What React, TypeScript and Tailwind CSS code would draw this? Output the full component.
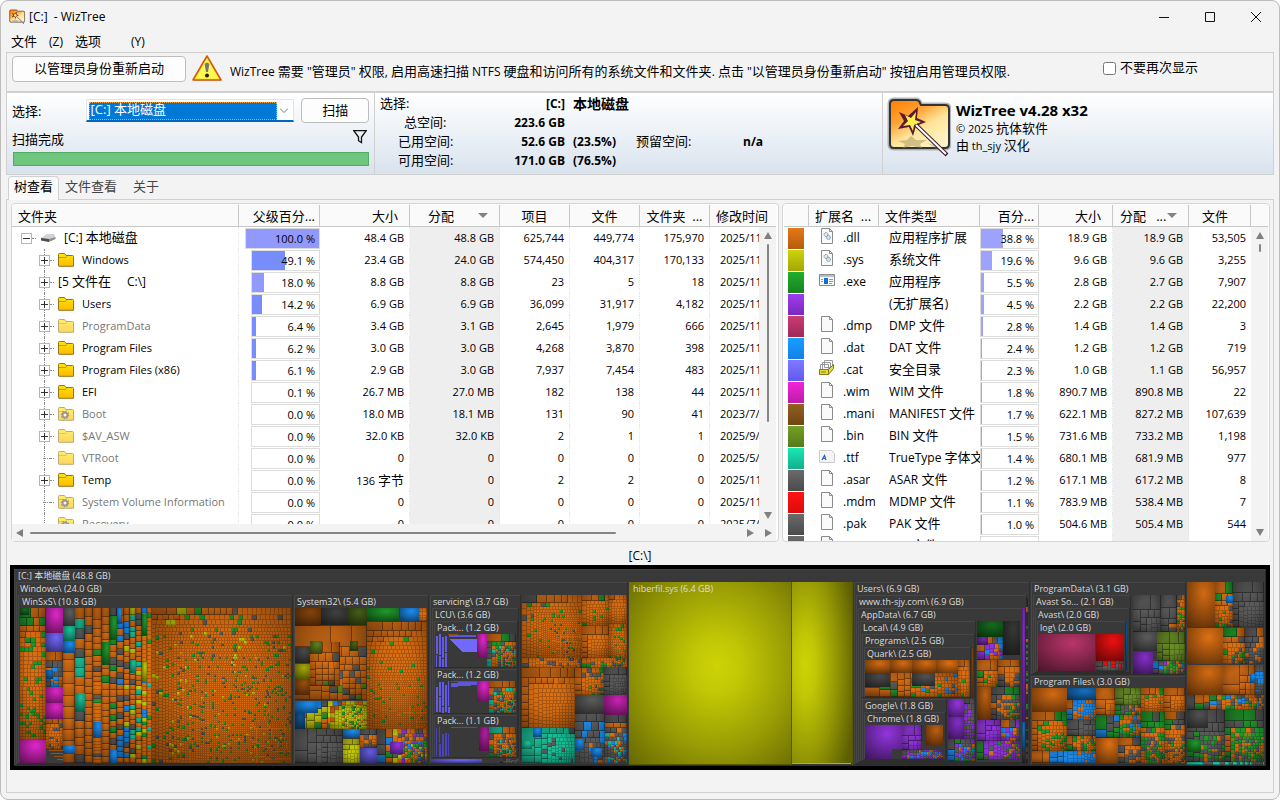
import { useId, useState, type ReactNode } from 'react'
import clsx from 'clsx'

/* ---------- data ---------- */

type FolderKind = 'drive' | 'files' | 'folder' | 'faded' | 'system'

type FolderRow = {
  name: string
  kind: FolderKind
  expandable: boolean
  percent: number
  size: string
  allocated: string
  items: string
  files: string
  folders: string
  modified: string
}

const f = (
  name: string, kind: FolderKind, expandable: boolean, percent: number, size: string,
  allocated: string, items: string, files: string, folders: string, modified: string,
): FolderRow => ({ name, kind, expandable, percent, size, allocated, items, files, folders, modified })

const FOLDERS: FolderRow[] = [
  f('[C:] 本地磁盘', 'drive', true, 100, '48.4 GB', '48.8 GB', '625,744', '449,774', '175,970', '2025/11'),
  f('Windows', 'folder', true, 49.1, '23.4 GB', '24.0 GB', '574,450', '404,317', '170,133', '2025/11'),
  f('[5 文件在', 'files', true, 18, '8.8 GB', '8.8 GB', '23', '5', '18', '2025/11'),
  f('Users', 'folder', true, 14.2, '6.9 GB', '6.9 GB', '36,099', '31,917', '4,182', '2025/11'),
  f('ProgramData', 'faded', true, 6.4, '3.4 GB', '3.1 GB', '2,645', '1,979', '666', '2025/11'),
  f('Program Files', 'folder', true, 6.2, '3.0 GB', '3.0 GB', '4,268', '3,870', '398', '2025/11'),
  f('Program Files (x86)', 'folder', true, 6.1, '2.9 GB', '3.0 GB', '7,937', '7,454', '483', '2025/11'),
  f('EFI', 'folder', true, 0.1, '26.7 MB', '27.0 MB', '182', '138', '44', '2025/11'),
  f('Boot', 'system', true, 0, '18.0 MB', '18.1 MB', '131', '90', '41', '2023/7/'),
  f('$AV_ASW', 'faded', true, 0, '32.0 KB', '32.0 KB', '2', '1', '1', '2025/9/'),
  f('VTRoot', 'faded', false, 0, '0', '0', '0', '0', '0', '2025/5/'),
  f('Temp', 'folder', true, 0, '136 字节', '0', '2', '2', '0', '2025/11'),
  f('System Volume Information', 'system', false, 0, '0', '0', '0', '0', '0', '2025/11'),
  f('Recovery', 'system', false, 0, '0', '0', '0', '0', '0', '2025/7/'),
]

type ExtIcon = 'gear' | 'exe' | 'none' | 'file' | 'cat' | 'font'
type ExtRow = [swatch: string, icon: ExtIcon, ext: string, type: string, percent: number, size: string, allocated: string, files: string]

const EXTENSIONS: ExtRow[] = [
  ['from-[#e67817] to-[#b65c0c]', 'gear', '.dll', '应用程序扩展', 38.8, '18.9 GB', '18.9 GB', '53,505'],
  ['from-[#cdd30a] to-[#a3a706]', 'gear', '.sys', '系统文件', 19.6, '9.6 GB', '9.6 GB', '3,255'],
  ['from-[#22ad2d] to-[#178320]', 'exe', '.exe', '应用程序', 5.5, '2.8 GB', '2.7 GB', '7,907'],
  ['from-[#a13cf0] to-[#7b28bd]', 'none', '', '(无扩展名)', 4.5, '2.2 GB', '2.2 GB', '22,200'],
  ['from-[#cb3b74] to-[#9e2a58]', 'file', '.dmp', 'DMP 文件', 2.8, '1.4 GB', '1.4 GB', '3'],
  ['from-[#179fff] to-[#1380ea]', 'file', '.dat', 'DAT 文件', 2.4, '1.2 GB', '1.2 GB', '719'],
  ['from-[#8079ff] to-[#6258ee]', 'cat', '.cat', '安全目录', 2.3, '1.0 GB', '1.1 GB', '56,957'],
  ['from-[#f026d6] to-[#be1ba9]', 'file', '.wim', 'WIM 文件', 1.8, '890.7 MB', '890.8 MB', '22'],
  ['from-[#91601f] to-[#6f4612]', 'file', '.mani', 'MANIFEST 文件', 1.7, '622.1 MB', '827.2 MB', '107,639'],
  ['from-[#739f29] to-[#567b1b]', 'file', '.bin', 'BIN 文件', 1.5, '731.6 MB', '733.2 MB', '1,198'],
  ['from-[#19e8b6] to-[#12b08a]', 'font', '.ttf', 'TrueType 字体文', 1.4, '680.1 MB', '681.9 MB', '977'],
  ['from-[#6b6b6b] to-[#4b4b4b]', 'file', '.asar', 'ASAR 文件', 1.2, '617.1 MB', '617.2 MB', '8'],
  ['from-[#ff1313] to-[#dc0b0b]', 'file', '.mdm', 'MDMP 文件', 1.1, '783.9 MB', '538.4 MB', '7'],
  ['from-[#6b6b6b] to-[#4b4b4b]', 'file', '.pak', 'PAK 文件', 1.0, '504.6 MB', '505.4 MB', '544'],
  ['from-[#6b6b6b] to-[#4b4b4b]', 'file', '', 'ETL 文件', 0, '', '', ''],
]

/* ---------- icons ---------- */

function AppLogo({ className }: { className: string }) {
  const id = useId()
  return (
    <svg viewBox="0 0 64 62" className={className} aria-hidden="true">
      <defs>
        <linearGradient id={id} x1="0" y1="0" x2="0.7" y2="1">
          <stop offset="0" stopColor="#ff7d00" />
          <stop offset="0.35" stopColor="#ffa030" />
          <stop offset="0.65" stopColor="#ffe59a" />
          <stop offset="1" stopColor="#fff3c4" />
        </linearGradient>
      </defs>
      <path d="M3 7q0-4 4-4h22q3 0 4 3l1 2h24q4 0 4 4v35q0 4-4 4H7q-4 0-4-4z" fill="none" stroke="#888" strokeWidth="5" opacity="0.6" />
      <path d="M3 7q0-4 4-4h22q3 0 4 3l1 2h24q4 0 4 4v35q0 4-4 4H7q-4 0-4-4z" fill={`url(#${id})`} stroke="#333" strokeWidth="2" />
      <path d="M11 44l9-1 4-4 5 4 11 0-7 4 2 4-10-2-9 2 2-4z" fill="#b3a26d" opacity="0.6" />
      <path d="M40 46l18 12-3-8z" fill="#8a8a8a" opacity="0.35" />
      <path d="M31 10l-1 11 9 4-10 4-3 10-4-9-11 2 6-8-5-9 9 4z" fill="#5b1b34" />
      <path d="M29 15l-1 8 6 2-7 3-1 6-3-6-7 1 5-5-3-6 6 3z" fill="#fbf04e" />
      <path d="M29 28L60 58" stroke="#3b1c24" strokeWidth="4" />
      <path d="M29 28L59 57" stroke="#fff" strokeWidth="2" />
    </svg>
  )
}

function WarningIcon() {
  return (
    <svg viewBox="0 0 30 28" className="h-7 w-[30px] shrink-0" aria-hidden="true">
      <path d="M15 2L29 26H2z" fill="#aaa" opacity="0.6" />
      <path d="M15 1L29 25H1z" fill="#ffef3a" stroke="#d45a0c" strokeWidth="1.6" strokeLinejoin="round" />
      <path d="M15 4L26 23H4z" fill="#ffff66" opacity="0.6" />
      <path d="M12.700 9q2.300-3 4.600 0l-1.300 8h-2z" fill="#777" />
      <circle cx="15" cy="20.500" r="2" fill="#222" />
    </svg>
  )
}

function FolderIcon({ kind }: { kind: FolderKind }) {
  const id = useId()
  return (
    <svg viewBox="0 0 16 14" className={clsx('h-3.5 w-4 shrink-0', kind !== 'folder' && 'opacity-60')} aria-hidden="true">
      <defs>
        <linearGradient id={id} x1="0" y1="0" x2="0" y2="1">
          <stop offset="0" stopColor="#ffe600" />
          <stop offset="1" stopColor="#fdb900" />
        </linearGradient>
      </defs>
      <path d="M.5 13V1.500q0-1 1-1h5l1.500 2h6.500q1 0 1 1V13.300H1z" fill={`url(#${id})`} stroke="#94741c" />
      <path d="M1 4.500h6.500L9 3.500" fill="none" stroke="#c99a0e" />
      {kind === 'system' && (
        <>
          <circle cx="7" cy="8" r="3.600" fill="none" stroke="#55554c" strokeWidth="1.400" strokeDasharray="1.400 1.400" />
          <circle cx="7" cy="8" r="2.400" fill="#fff8c8" stroke="#55554c" strokeWidth="1.800" />
        </>
      )}
    </svg>
  )
}

function DriveIcon() {
  return (
    <svg viewBox="0 0 16 10" className="h-2.5 w-4 shrink-0" aria-hidden="true">
      <path d="M1 5L7 1h7l1.500 3L9 8z" fill="#d2d2d2" />
      <path d="M1 5l8 1v3L1 7.500z" fill="#4c4c4c" />
      <path d="M9 6l6.500-2v2L9 9z" fill="#8f8f8f" />
    </svg>
  )
}

function ExtensionIcon({ icon }: { icon: ExtIcon }) {
  if (icon === 'none') return null
  if (icon === 'exe') {
    return (
      <svg viewBox="0 0 16 12" className="mb-1 h-3 w-4" aria-hidden="true">
        <path d="M.5.500h15v11H.5z" fill="#f6f6f6" stroke="#85898d" />
        <path d="M1 1h14v2H1z" fill="#b9bfc5" />
        <path d="M5 4h4v6H5z" fill="#0a6fd8" />
        <path d="M10 5.500h4M10 7.500h4M10 9.500h3M2 5.500h2M2 7.500h2" stroke="#999" />
      </svg>
    )
  }
  if (icon === 'cat') {
    return (
      <svg viewBox="0 0 16 16" className="mb-1 h-4 w-4" aria-hidden="true">
        <path d="M5.500.500h8v7h-8zM3.500 2.500h8v7h-8zM1.500 4.500h8v6h-8z" fill="#fff" stroke="#999" />
        <path d="M.5 9.500h9l5-5v4l-5 6h-9z" fill="#e8dc3c" stroke="#827a16" />
        <path d="M9.500 9.500v5M2 12h5" stroke="#827a16" />
      </svg>
    )
  }
  if (icon === 'font') {
    return (
      <svg viewBox="0 0 16 13" className="mb-1 h-[13px] w-4" aria-hidden="true">
        <path d="M.5.500h12l3 3v9H.5z" fill="#f4f4f4" stroke="#ccc" />
        <path d="M3 10L5.500 5.500 7 10M4.200 8.500h2.500" fill="none" stroke="#2b5fc7" strokeWidth="1.200" />
      </svg>
    )
  }
  return (
    <svg viewBox="0 0 12 16" className="mb-1 h-4 w-3" aria-hidden="true">
      <path d="M.5.500h8l3 3v12H.5z" fill="#fafafa" stroke="#8b8b8b" />
      <path d="M8.500.500v3h3" fill="none" stroke="#8b8b8b" />
      {icon === 'gear' && (
        <>
          <circle cx="5" cy="6.500" r="2" fill="#dfe8f0" stroke="#7c8b97" strokeDasharray="1 .5" />
          <circle cx="7.500" cy="9.500" r="2" fill="#cbe2f5" stroke="#6d8da8" strokeDasharray="1 .5" />
        </>
      )}
    </svg>
  )
}

function Arrow({ dir }: { dir: 'up' | 'down' | 'left' | 'right' }) {
  const d = { up: 'M4 0l4 7H0z', down: 'M0 1h8L4 8z', left: 'M0 4l7-4v8z', right: 'M1 0l7 4-7 4z' }[dir]
  return (
    <svg viewBox="0 0 8 8" className="h-2 w-2 shrink-0" aria-hidden="true">
      <path d={d} fill="#7f7f7f" />
    </svg>
  )
}

function SortArrow() {
  return (
    <svg viewBox="0 0 10 5" className="h-[5px] w-2.5 shrink-0" aria-hidden="true">
      <path d="M0 0h10L5 5z" fill="#828282" />
    </svg>
  )
}

/* ---------- small parts ---------- */

// Han characters are set one size up from the Latin ones beside them
function Mixed({ children }: { children: string }) {
  return (
    <>
      {children.split(/([\u4e00-\u9fff]+)/).map((part, i) =>
        i % 2 ? <span key={i} className="text-[13px]">{part}</span> : part,
      )}
    </>
  )
}

function Th({ children, className }: { children?: ReactNode; className?: string }) {
  return (
    <th className={clsx('h-[22px] overflow-hidden border-r border-b border-[#c8c8c8] bg-[#fafafa] p-0 text-[13px] leading-5 font-normal whitespace-nowrap', className)}>
      {children}
    </th>
  )
}

function Num({ children, shaded, className }: { children: string; shaded?: boolean; className?: string }) {
  return (
    <td className={clsx('overflow-hidden border-r border-dotted border-[#e6e6e6] p-0 pr-[5px] text-right text-[11px] leading-5 whitespace-nowrap', shaded && 'bg-[#eeeeee]', className)}>
      <Mixed>{children}</Mixed>
    </td>
  )
}

function PercentBar({ value, className, fill }: { value: number; className?: string; fill: string }) {
  return (
    <div className={clsx('relative h-[21px] border border-[#dddddd] bg-white', className)}>
      <div className={clsx('h-full', fill)} style={{ width: `${value < 1 ? 0 : value}%` }} />
      <span className="absolute inset-y-0 right-1 text-[11px] leading-[19px]">{value.toFixed(1)} %</span>
    </div>
  )
}

function VScroll({ thumb }: { thumb: string }) {
  return (
    <div className="flex w-[17px] shrink-0 flex-col items-center bg-[#f3f3f3] py-[5px]">
      <Arrow dir="up" />
      <div className={clsx('mt-1 w-0.5 rounded bg-[#858585]', thumb)} />
      <div className="mt-auto flex"><Arrow dir="down" /></div>
    </div>
  )
}

/* ---------- tables ---------- */

function TreeCell({ row, last }: { row: FolderRow; last: boolean }) {
  const root = row.kind === 'drive'
  return (
    <div className={clsx('relative flex h-[22px] items-center', root ? 'pl-[9px]' : 'pl-[27px]')}>
      {!root && <span className={clsx('absolute top-0 left-8 border-l border-dotted border-[#888]', last ? 'h-3' : 'h-full')} />}
      {row.expandable ? (
        <button aria-label={root ? '折叠' : '展开'} className="relative flex size-[11px] shrink-0 items-center justify-center border border-[#b5b5b5] bg-white">
          <span className="h-px w-[7px] bg-[#333]" />
          {!root && <span className="absolute h-[7px] w-px bg-[#333]" />}
        </button>
      ) : (
        <span className="ml-1 w-[7px] shrink-0 border-t border-dotted border-[#888]" />
      )}
      <span className="w-1 shrink-0 border-t border-dotted border-[#888]" />
      <span className={clsx('ml-1 flex items-center', row.kind !== 'files' && 'gap-2')}>
        {root && <DriveIcon />}
        {!root && row.kind !== 'files' && <FolderIcon kind={row.kind} />}
        <span className={clsx('whitespace-pre', root || row.kind === 'files' ? 'text-xs' : 'text-[11px]', (row.kind === 'faded' || row.kind === 'system') && 'text-[#777]')}>
          <Mixed>{row.name}</Mixed>
          {row.kind === 'files' && <span className="ml-4">C:\]</span>}
        </span>
      </span>
    </div>
  )
}

function FolderTable() {
  return (
    <section className="flex min-w-0 flex-[769] flex-col rounded-sm border border-[#d5d5d5] bg-white pt-px pr-0.5">
      <div className="relative flex h-[319px] overflow-hidden">
        <table className="w-full table-fixed border-separate border-spacing-0 self-start">
          <colgroup>
            <col className="w-[227px]" /><col className="w-[81px]" /><col className="w-[90px]" /><col className="w-[90px]" />
            <col className="w-[70px]" /><col className="w-[70px]" /><col className="w-[70px]" /><col />
          </colgroup>
          <thead>
            <tr>
              <Th className="pl-1.5 text-left">文件夹</Th>
              <Th className="pr-1 text-right">父级百分...</Th>
              <Th className="pr-[11px] text-right">大小</Th>
              <Th><div className="flex items-center pl-[18px]">分配<span className="ml-6 flex"><SortArrow /></span></div></Th>
              <Th>项目</Th>
              <Th>文件</Th>
              <Th className="whitespace-pre">文件夹  ...</Th>
              <Th className="border-r-0 pl-1.5 text-left">修改时间</Th>
            </tr>
          </thead>
          <tbody>
            {FOLDERS.map((row, i) => (
              <tr key={row.name} className="h-[22px]">
                <td className="overflow-hidden border-r border-dotted border-[#e6e6e6] p-0"><TreeCell row={row} last={i === FOLDERS.length - 1} /></td>
                <td className="p-0">
                  <PercentBar
                    value={row.percent}
                    className={row.kind === 'drive' ? 'ml-1.5' : 'ml-3'}
                    fill={row.kind === 'drive' || row.kind === 'files' ? 'bg-[#9299fd]' : 'bg-[#788dfc]'}
                  />
                </td>
                <Num>{row.size}</Num>
                <Num shaded>{row.allocated}</Num>
                <Num>{row.items}</Num>
                <Num>{row.files}</Num>
                <Num>{row.folders}</Num>
                <td className="overflow-hidden p-0 pl-2.5 text-[11px] leading-5 whitespace-nowrap">{row.modified}</td>
              </tr>
            ))}
          </tbody>
        </table>
        <div className="absolute top-[22px] right-0 bottom-0 flex"><VScroll thumb="h-[178px]" /></div>
      </div>
      <div className="flex h-[17px] items-center bg-[#f3f3f3] pl-1">
        <Arrow dir="left" />
        <div className="ml-1.5 h-0.5 flex-[588] rounded bg-[#858585]" />
        <div className="flex-[130]" />
        <Arrow dir="right" />
        <span className="mr-1 ml-2.5 flex"><Arrow dir="right" /></span>
      </div>
    </section>
  )
}

function ExtensionTable() {
  return (
    <section className="min-w-0 flex-[487] rounded-sm border border-[#d5d5d5] bg-white px-px pt-px">
      <div className="relative flex h-[336px] overflow-hidden">
        <table className="w-full table-fixed border-separate border-spacing-0 self-start">
          <colgroup>
            <col className="w-[25px]" /><col className="w-[70px]" /><col className="w-[101px]" /><col className="w-[59px]" />
            <col className="w-[74px]" /><col className="w-[76px]" /><col className="w-[62px]" /><col />
          </colgroup>
          <thead>
            <tr>
              <Th />
              <Th className="pl-1.5 text-left whitespace-pre">扩展名  ...</Th>
              <Th className="pl-1.5 text-left">文件类型</Th>
              <Th className="pr-1 text-right">百分...</Th>
              <Th className="pr-[11px] text-right">大小</Th>
              <Th><div className="flex items-center pl-[7px]">分配<span className="ml-2.5">...</span><span className="ml-px flex"><SortArrow /></span></div></Th>
              <Th className="pr-[22px] text-right">文件</Th>
              <Th className="border-r-0" />
            </tr>
          </thead>
          <tbody>
            {EXTENSIONS.map(([swatch, icon, ext, type, percent, size, allocated, files]) => (
              <tr key={type} className="h-[22px]">
                <td className="p-0"><div className="mr-[5px] ml-1"><div className={clsx('h-[21px] bg-linear-to-b', swatch)} /></div></td>
                <td className="p-0">
                  <div className="flex h-[22px] items-center overflow-hidden pr-1">
                    <span className="ml-2.5 flex w-4 shrink-0 justify-center"><ExtensionIcon icon={icon} /></span>
                    <span className="ml-2 overflow-hidden">{ext}</span>
                  </div>
                </td>
                <td className="p-0"><div className="ml-2.5 overflow-hidden whitespace-nowrap"><Mixed>{type}</Mixed></div></td>
                <td className="p-0"><PercentBar value={percent} fill="bg-[#9da3fd]" /></td>
                <Num>{size}</Num>
                <Num shaded>{allocated}</Num>
                <Num className="border-r-0">{files}</Num>
                <td className="p-0" />
              </tr>
            ))}
          </tbody>
        </table>
        <div className="absolute top-[22px] right-0 bottom-0 flex"><VScroll thumb="h-2" /></div>
      </div>
    </section>
  )
}

/* ---------- tree map ---------- */

const COLORS = {
  o: '#dd7013', g: '#1f9a2b', k: '#5c5c5c', b: '#1b8cf0', y: '#c3c80a', t: '#19c49b',
  m: '#e026c8', v: '#6f66fa', p: '#9235dd', l: '#6b8f26', r: '#ee1010', c: '#b93569', d: '#393939',
}
type ColorKey = keyof typeof COLORS
type Rect = { x: number; y: number; w: number; h: number }

function random(seed: number) {
  let s = seed * 2654435761
  return () => {
    s = (s + 0x6d2b79f5) | 0
    let t = Math.imul(s ^ (s >>> 15), 1 | s)
    t = (t + Math.imul(t ^ (t >>> 7), 61 | t)) ^ t
    return ((t ^ (t >>> 14)) >>> 0) / 4294967296
  }
}

// Squarified layout of descending areas that add up to the area of the box
function squarify(areas: number[], box: Rect) {
  const out: Rect[] = []
  let { x, y, w, h } = box
  let i = 0
  while (i < areas.length && w > 0.01 && h > 0.01) {
    const side = Math.min(w, h)
    let sum = areas[i]
    let end = i + 1
    const worst = (total: number, max: number, min: number) =>
      Math.max((side * side * max) / (total * total), (total * total) / (side * side * min))
    while (end < areas.length && worst(sum + areas[end], areas[i], areas[end]) <= worst(sum, areas[i], areas[end - 1])) {
      sum += areas[end]
      end++
    }
    const depth = sum / side
    let pos = 0
    for (; i < end; i++) {
      const len = areas[i] / depth
      out.push(w >= h ? { x, y: y + pos, w: depth, h: len } : { x: x + pos, y, w: len, h: depth })
      pos += len
    }
    if (w >= h) {
      x += depth
      w -= depth
    } else {
      y += depth
      h -= depth
    }
  }
  return out
}

// x1, y1, x2, y2, number of files, size falloff, colour mix
type Block = [number, number, number, number, number, number, string]

const BLOCKS: Block[] = [
  // WinSxS
  [20, 608, 46, 740, 240, 0.5, 'ooooooooooggg'],
  [46, 652, 63, 687, 22, 0.6, 'oookkb'],
  [46, 719, 63, 749, 60, 0.5, 'ooooook'],
  [63, 608, 75, 763, 13, 0.1, 'oooooook'],
  [75, 608, 85, 763, 17, 0.1, 'ooookkt'],
  [85, 608, 93, 763, 21, 0.1, 'oooooook'],
  [93, 608, 102, 763, 34, 0.4, 'oooooooogkb'],
  [102, 608, 110, 763, 22, 0.1, 'ooooooog'],
  [110, 608, 117, 763, 24, 0.1, 'kkgooook'],
  [117, 608, 124, 763, 26, 0.1, 'ooookkb'],
  [124, 608, 130, 763, 28, 0.1, 'oookykb'],
  [130, 608, 136, 763, 30, 0.1, 'ooooooytk'],
  [136, 608, 142, 763, 32, 0.1, 'ooooooykt'],
  [142, 608, 147, 763, 38, 0.1, 'oooogyb'],
  [147, 608, 152, 763, 40, 0.1, 'ooooooooogt'],
  [152, 608, 291, 763, 3600, 0.42, 'ooooooooooooooooooooooooooooooooooooooooogggkky'],
  // System32
  [295, 626, 367, 700, 60, 0.8, 'ooooooooookl'],
  [310, 642, 340, 686, 26, 0.5, 'ooookl'],
  [367, 622, 427, 729, 900, 0.55, 'oooooooooooooooooooog'],
  [295, 701, 367, 729, 90, 0.7, 'bboyyyoogk'],
  [330, 706, 367, 729, 140, 0.5, 'yyyyog'],
  [295, 729, 343, 763, 34, 0.8, 'kkkkkkkk'],
  [343, 739, 360, 763, 20, 0.6, 'y'],
  [360, 729, 377, 748, 14, 0.6, 'okko'],
  [377, 729, 427, 763, 120, 0.7, 'oookkbgpyo'],
  [419, 608, 427, 621, 8, 0.3, 'o'],
  // servicing
  [487, 634, 516, 667, 120, 0.8, 'ookktgokoo'],
  [489, 681, 516, 713, 120, 0.8, 'ookktgokoo'],
  [489, 727, 516, 757, 120, 0.8, 'ookktgokoo'],
  [500, 759, 519, 763, 24, 0.4, 'kkkd'],
  // Windows, remaining folders
  [522, 595, 582, 658, 640, 0.6, 'ooooooooooooooooooooogk'],
  [582, 595, 609, 626, 90, 0.6, 'ooooooooog'],
  [609, 595, 627, 624, 60, 0.4, 'oooooooo'],
  [582, 626, 609, 658, 60, 0.8, 'oooooooo'],
  [609, 624, 627, 658, 130, 0.4, 'oooooooog'],
  [582, 658, 627, 668, 60, 0.5, 'oooogk'],
  [522, 658, 582, 668, 70, 0.5, 'oooookk'],
  [522, 668, 575, 728, 170, 0.6, 'oooooooooooo'],
  [575, 668, 604, 695, 60, 0.6, 'ooooogk'],
  [604, 667, 627, 695, 60, 0.9, 'kkkkkkk'],
  [575, 695, 605, 763, 50, 0.8, 'kkkkkkbo'],
  [605, 715, 627, 763, 90, 0.7, 'kkkkoobt'],
  [522, 728, 575, 763, 90, 0.8, 'tttttkt'],
  // Users
  [865, 673, 958, 697, 90, 0.7, 'ooooooobgk'],
  [958, 660, 970, 697, 30, 0.5, 'ooog'],
  [902, 750, 943, 759, 60, 0.5, 'ppokkb'],
  [902, 725, 922, 750, 12, 0.9, 'ppp'],
  [948, 739, 975, 761, 50, 0.7, 'kkobppg'],
  [964, 699, 975, 739, 36, 0.4, 'kkppk'],
  [977, 637, 1003, 660, 22, 0.8, 'ppokbo'],
  [977, 660, 998, 687, 26, 1, 'oooog'],
  [998, 660, 1020, 687, 18, 0.6, 'okok'],
  [991, 687, 1020, 720, 60, 0.7, 'kkoogk'],
  [977, 720, 1001, 741, 18, 0.9, 'ppp'],
  [1001, 720, 1020, 741, 22, 0.7, 'okpob'],
  [977, 741, 1020, 760, 80, 0.7, 'ppopkgp'],
  [1026, 598, 1028, 763, 60, 0.2, 'dgdkdo'],
  // ProgramData
  [1133, 595, 1161, 632, 16, 0.9, 'kkkkkk'],
  [1161, 595, 1177, 632, 8, 0.9, 'kkko'],
  [1177, 595, 1185, 632, 40, 0.4, 'oogk'],
  [1157, 632, 1185, 661, 18, 0.7, 'lllll'],
  [1153, 661, 1185, 674, 40, 0.6, 'kkpbglo'],
  [1096, 661, 1124, 671, 16, 0.5, 'kkkkr'],
  // Program Files
  [1032, 712, 1067, 751, 90, 0.7, 'oooooogg'],
  [1067, 720, 1096, 736, 12, 0.8, 'kkkk'],
  [1067, 700, 1096, 720, 50, 0.6, 'obbo'],
  [1067, 736, 1096, 751, 46, 0.7, 'okogo'],
  [1032, 751, 1096, 763, 34, 0.8, 'bbbbo'],
  [1096, 688, 1115, 715, 8, 1.2, 'oooo'],
  [1115, 688, 1141, 705, 14, 0.7, 'llll'],
  [1115, 705, 1141, 715, 20, 0.5, 'kkgo'],
  [1096, 715, 1141, 738, 50, 0.8, 'kgogkob'],
  [1118, 738, 1141, 763, 24, 0.8, 'kookoo'],
  [1141, 688, 1164, 712, 44, 0.6, 'ooooooog'],
  [1164, 688, 1185, 712, 24, 0.9, 'ooooooo'],
  [1141, 712, 1165, 763, 100, 0.7, 'oogggkko'],
  [1165, 712, 1185, 763, 100, 0.7, 'oookgoko'],
  // Program Files (x86)
  [1215, 582, 1233, 627, 40, 0.8, 'koogo'],
  [1233, 582, 1264, 627, 50, 0.8, 'kkkkkkk'],
  [1223, 628, 1245, 664, 40, 0.8, 'kogooo'],
  [1245, 628, 1264, 664, 40, 0.8, 'kkkko'],
  [1223, 665, 1255, 695, 12, 1.1, 'ooooo'],
  [1255, 665, 1264, 695, 20, 0.5, 'kkkb'],
  [1187, 695, 1264, 710, 70, 0.7, 'oookkgb'],
  [1187, 710, 1225, 762, 70, 0.75, 'kkkkggok'],
  [1225, 710, 1264, 762, 120, 0.75, 'kkgggoolk'],
  [1187, 762, 1264, 765, 20, 0.8, 'tk'],
]

type Solid = [number, number, number, number, ColorKey, number?]

// single big files, last value is the darkness laid over them
const SOLIDS: Solid[] = [
  [46, 608, 63, 633, 'm'], [46, 633, 63, 652, 'v'], [46, 687, 63, 703, 'm'], [46, 703, 63, 719, 'm'],
  [20, 740, 46, 763, 'm'], [20, 608, 29, 615, 'g', 0.3], [63, 608, 75, 626, 'k'], [63, 626, 75, 641, 't'],
  [63, 641, 75, 653, 'b'], [75, 693, 85, 711, 't'], [93, 722, 102, 738, 'b'], [102, 642, 110, 665, 'g'],
  [117, 608, 122, 624, 'b'], [110, 616, 117, 640, 'g'], [142, 614, 147, 636, 'g'], [142, 662, 147, 682, 'y'],
  [63, 745, 75, 754, 'b'], [130, 660, 136, 673, 't'], [46, 670, 53, 679, 'b', 0.2], [110, 750, 117, 763, 'b'],
  [295, 608, 321, 626, 'o', 0.4], [321, 608, 347, 625, 'k', 0.3], [347, 608, 367, 625, 'l', 0.35],
  [295, 647, 310, 663, 'k', 0.2], [295, 664, 310, 679, 'y', 0.15], [295, 679, 310, 695, 'o', 0.3],
  [310, 641, 322, 654, 'l', 0.1], [350, 641, 358, 651, 'l', 0.3],
  [367, 608, 399, 621, 'g'], [400, 608, 419, 621, 'b'], [295, 701, 318, 713, 'b'],
  [295, 713, 305, 729, 'b', 0.4], [343, 729, 360, 738, 'b'], [360, 748, 377, 763, 'v', 0.1], [390, 742, 403, 754, 'p'],
  [477, 634, 487, 657, 'm'], [477, 681, 489, 701, 'm'], [479, 727, 489, 751, 'm', 0.2], [431, 759, 482, 763, 'v'],
  [604, 695, 627, 715, 'm', 0.1], [575, 695, 604, 714, 'k'], [533, 728, 541, 737, 'b'], [522, 741, 532, 749, 't'],
  [575, 739, 584, 750, 'b'], [591, 748, 602, 757, 'b'],
  [865, 660, 890, 673, 'o', 0.05], [890, 660, 912, 673, 'o', 0.05], [912, 660, 936, 673, 'o', 0.05],
  [936, 660, 958, 673, 'o'], [865, 673, 890, 687, 'k', 0.2], [912, 673, 935, 686, 'k', 0.1],
  [972, 648, 973, 697, 'o', 0.4], [926, 725, 943, 745, 'o', 0.15],
  [948, 699, 964, 717, 'p'], [948, 717, 964, 739, 'p', 0.1], [977, 621, 1003, 637, 'g', 0.3],
  [1003, 621, 1020, 655, 'k', 0.4], [977, 637, 988, 645, 'p', 0.2], [977, 687, 991, 720, 'o', 0.15],
  [1022, 608, 1025, 722, 'p', 0.1], [1022, 722, 1025, 750, 'b', 0.2], [1022, 750, 1025, 763, 'k', 0.4],
  [1038, 634, 1095, 671, 'c'], [1096, 634, 1124, 661, 'r'], [1126, 621, 1127, 670, 'b', 0.4],
  [1133, 632, 1157, 651, 'k'], [1133, 652, 1153, 674, 'p', 0.1],
  [1032, 688, 1067, 712, 'o', 0.05], [1067, 688, 1096, 700, 'b', 0.2], [1096, 738, 1118, 763, 'o'],
  [1187, 582, 1215, 627, 'o', 0.05], [1187, 628, 1223, 664, 'o'], [1187, 665, 1223, 695, 'o', 0.05],
  [1187, 710, 1208, 728, 'k', 0.1], [1187, 740, 1201, 752, 'g'], [1226, 596, 1233, 603, 'b'], [1250, 674, 1255, 683, 'b'],
]

const FRAMES: [number, number, number, number][] = [
  [14, 569, 1266, 766], [16, 582, 628, 765], [18, 595, 293, 764], [294, 595, 429, 764], [430, 595, 521, 764],
  [432, 608, 519, 758], [434, 621, 518, 668], [434, 669, 518, 714], [434, 715, 518, 758],
  [854, 582, 1030, 765], [856, 595, 1027, 764], [858, 608, 1026, 763], [860, 621, 976, 762], [862, 634, 975, 698],
  [864, 647, 971, 698], [862, 699, 947, 761], [864, 712, 946, 760],
  [1031, 582, 1186, 675], [1033, 595, 1131, 674], [1035, 608, 1130, 673], [1037, 621, 1126, 672], [1031, 676, 1186, 765],
]

const LABELS: [number, number, string][] = [
  [18, 579, '[C:] 本地磁盘 (48.8 GB)'], [20, 592, 'Windows\\ (24.0 GB)'], [22, 605, 'WinSxS\\ (10.8 GB)'],
  [297, 605, 'System32\\ (5.4 GB)'], [433, 605, 'servicing\\ (3.7 GB)'], [435, 618, 'LCU\\ (3.6 GB)'],
  [437, 631, 'Pack... (1.2 GB)'], [437, 678, 'Pack... (1.2 GB)'], [437, 724, 'Pack... (1.1 GB)'],
  [633, 592, 'hiberfil.sys (6.4 GB)'], [857, 592, 'Users\\ (6.9 GB)'], [859, 605, 'www.th-sjy.com\\ (6.9 GB)'],
  [861, 618, 'AppData\\ (6.7 GB)'], [863, 631, 'Local\\ (4.9 GB)'], [865, 644, 'Programs\\ (2.5 GB)'],
  [867, 657, 'Quark\\ (2.5 GB)'], [865, 709, 'Google\\ (1.8 GB)'], [867, 722, 'Chrome\\ (1.8 GB)'],
  [1034, 592, 'ProgramData\\ (3.1 GB)'], [1036, 605, 'Avast So... (2.1 GB)'], [1038, 618, 'Avast\\ (2.0 GB)'],
  [1040, 631, 'log\\ (2.0 GB)'], [1034, 685, 'Program Files\\ (3.0 GB)'],
]

function layoutBlock([x1, y1, x2, y2, count, falloff, mix]: Block, seed: number) {
  const rand = random(seed + 11)
  const weights = Array.from({ length: count }, (_, i) => 1 / Math.pow(i + 1, falloff))
  const total = weights.reduce((a, b) => a + b, 0)
  const area = (x2 - x1) * (y2 - y1)
  const areas = weights.map(v => (v / total) * area)
  const narrow = x2 - x1 < 13 && y2 - y1 > 100
  const cells = narrow ? stack(areas, x1, y1, x2 - x1) : squarify(areas, { x: x1, y: y1, w: x2 - x1, h: y2 - y1 })
  const fills: Partial<Record<ColorKey, string>> = {}
  const large: (Rect & { color: ColorKey })[] = []
  let shade = ''
  for (const c of cells) {
    const color = mix[Math.floor(rand() * mix.length)] as ColorKey
    const x = Math.round(c.x)
    const y = Math.round(c.y)
    const w = Math.round(c.x + c.w) - x
    const h = Math.round(c.y + c.h) - y
    if (w < 1 || h < 1) continue
    if (w >= 6 && h >= 5) {
      large.push({ x, y, w, h, color })
      continue
    }
    fills[color] = `${fills[color] ?? ''}M${x} ${y}h${w}v${h}h${-w}z`
    if (w > 1 && h > 1) shade += `M${x} ${y + h - 1}h${w}v1h${-w}zM${x + w - 1} ${y}h1v${h - 1}h-1z`
  }
  return { fills, large, shade }
}

// one column of cells, top to bottom
function stack(areas: number[], x: number, top: number, w: number) {
  let y = top
  return areas.map(area => {
    const cell = { x, y, w, h: area / w }
    y += cell.h
    return cell
  })
}

const LAID_OUT = BLOCKS.map((block, i) => ({ block, ...layoutBlock(block, i) }))

// violet comb of thin files at the left of each update package
function comb(x1: number, y1: number, x2: number, y2: number, seed: number) {
  const rand = random(seed)
  let d = ''
  for (let x = x1; x < x2; x += 3) {
    let y = y1 + Math.floor(rand() * 8)
    while (y < y2) {
      const h = Math.min(y2 - y, 10 + Math.floor(rand() * 20))
      const w = rand() > 0.4 ? 2 : 1
      d += `M${x} ${y}h${w}v${h}h${-w}z`
      y += h + 1
    }
  }
  return d
}

function TreeMap() {
  return (
    <svg viewBox="10 565 1260 205" className="block h-auto w-full" role="img" aria-label="C:\ 树形图">
      <defs>
        {Object.entries(COLORS).map(([key, color]) => (
          <linearGradient key={key} id={`tm-${key}`} x1="0.2" y1="0" x2="0.6" y2="1">
            <stop offset="0" stopColor={color} />
            <stop offset="1" stopColor={color} stopOpacity="0.75" />
          </linearGradient>
        ))}
        <radialGradient id="tm-cushion" cx="0.5" cy="0.45" r="0.75">
          <stop offset="0" stopColor="#000" stopOpacity="0" />
          <stop offset="0.4" stopColor="#000" stopOpacity="0.05" />
          <stop offset="1" stopColor="#000" stopOpacity="0.45" />
        </radialGradient>
        <radialGradient id="tm-corner" cx="0.6" cy="0.25" r="0.95">
          <stop offset="0" stopColor="#000" stopOpacity="0" />
          <stop offset="1" stopColor="#000" stopOpacity="0.6" />
        </radialGradient>
        <radialGradient id="tm-hiber" cx="0.54" cy="0.46" r="0.75">
          <stop offset="0" stopColor="#cdd306" />
          <stop offset="0.2" stopColor="#c2c705" />
          <stop offset="0.6" stopColor="#999c04" />
          <stop offset="1" stopColor="#666802" />
        </radialGradient>
        <radialGradient id="tm-hiber2" cx="0.22" cy="0.46" r="0.85">
          <stop offset="0" stopColor="#cdd306" />
          <stop offset="0.2" stopColor="#c2c705" />
          <stop offset="0.6" stopColor="#949704" />
          <stop offset="1" stopColor="#5d6002" />
        </radialGradient>
      </defs>
      <rect x="10" y="565" width="1260" height="205" fill="#000" />
      <rect x="14" y="569" width="1252" height="197" fill="#393939" />
      <g shapeRendering="crispEdges">
        {FRAMES.map(([x1, y1, x2, y2]) => (
          <g key={`${x1}-${y1}`} fill="none">
            <path d={`M${x1 + 0.5} ${y2}V${y1 + 0.5}H${x2}`} stroke="#464646" />
            <path d={`M${x1} ${y2 - 0.5}H${x2 - 0.5}V${y1}`} stroke="#2d2d2d" />
          </g>
        ))}
        {LAID_OUT.map(({ block: [x1, y1, x2, y2], fills, large, shade }) => (
          <g key={`${x1}-${y1}-${x2}`}>
            <rect x={x1} y={y1} width={x2 - x1} height={y2 - y1} fill="#232323" />
            {Object.entries(fills).map(([key, d]) => <path key={key} d={d} fill={COLORS[key as ColorKey]} />)}
            <path d={shade} fill="#000" opacity="0.2" />
            {large.map(c => (
              <g key={`${c.x}-${c.y}`}>
                <rect x={c.x} y={c.y} width={c.w} height={c.h} fill={`url(#tm-${c.color})`} />
                <path d={`M${c.x} ${c.y + c.h - 0.5}h${c.w - 0.5}V${c.y}`} fill="none" stroke="#000" strokeOpacity="0.35" />
              </g>
            ))}
            <rect x={x1} y={y1} width={x2 - x1} height={y2 - y1} fill="url(#tm-cushion)" />
          </g>
        ))}
        {SOLIDS.map(([x1, y1, x2, y2, color, dark = 0]) => (
          <g key={`${x1}-${y1}`}>
            <rect x={x1} y={y1} width={x2 - x1} height={y2 - y1} fill={COLORS[color]} />
            <rect x={x1} y={y1} width={x2 - x1} height={y2 - y1} fill="#000" opacity={dark} />
            <rect x={x1} y={y1} width={x2 - x1} height={y2 - y1} fill="url(#tm-corner)" />
          </g>
        ))}
        {/* unfinished corner of the component store */}
        <path d="M49 749H63V763H49z" fill="#3b3b3b" />
        <path d="M49 750h14M51 753h12M54 756h9M57 759h6" stroke="#96520f" />
        {/* update packages */}
        <path d={comb(436, 634, 448, 667, 3)} fill="#6159e8" />
        <path d={comb(436, 681, 451, 713, 4)} fill="#6159e8" />
        <path d={comb(436, 727, 451, 757, 5)} fill="#4a42b8" />
        <path d="M450 639H477V652H462z" fill="#7169fa" />
        <path d="M449 635h27v2h-27zM451 683l26-2v4l-26 2z" fill="#5d55dc" />
        <path d="M448 634h10v1h-10zM451 681h26v1h-26zM451 727h26v1h-26z" fill="#8a4c10" />
        {/* hiberfil.sys and pagefile.sys */}
        <rect x="629" y="582" width="163" height="183" fill="url(#tm-hiber)" />
        <rect x="792" y="582" width="61" height="181" fill="url(#tm-hiber2)" />
        <path d="M792 763.500h59" stroke="#b2b500" />
        <path d="M791.500 582v183M852.500 582v183M629 764.500h163" fill="none" stroke="#565800" />
        {/* Chrome */}
        <path d="M865 725h37v24h-10v10h-27z" fill={COLORS.p} />
        <path d="M865 725h37v24h-10v10h-27z" fill="url(#tm-corner)" />
      </g>
      {LABELS.map(([x, y, text]) => (
        <text key={`${x}-${y}`} x={x} y={y} fill="#dcdcdc" className="text-[9px]">{text}</text>
      ))}
    </svg>
  )
}

/* ---------- window ---------- */

const TABS = ['树查看', '文件查看', '关于']

const panel = 'border-[#d0d0d0] bg-linear-to-b from-white to-[#d9e3ee]'
const button = 'rounded border border-[#bdbdbd] bg-[#fdfdfd] text-[13px] hover:bg-[#e5f1fb]'

export default function App() {
  const [tab, setTab] = useState(TABS[0])

  return (
    <div className="flex min-h-screen flex-col overflow-hidden rounded-lg border border-[#bcbcbc] bg-[#f3f3f3] px-[5px] pb-1.5 font-['Open_Sans','Noto_Sans_CJK_SC',sans-serif] text-xs text-black">
      <header className="-mr-[5px] flex h-[31px] items-center pl-[3px]">
        <AppLogo className="h-4 w-4" />
        <h1 className="ml-1 whitespace-pre">[C:]  - WizTree</h1>
        <div className="ml-auto flex">
          <button aria-label="最小化" className="flex h-[30px] w-[46px] items-center justify-center">
            <svg viewBox="0 0 10 10" className="size-2.5"><path d="M0 5.500h10" stroke="#111" /></svg>
          </button>
          <button aria-label="最大化" className="flex h-[30px] w-[46px] items-center justify-center">
            <svg viewBox="0 0 10 10" className="size-2.5"><path d="M.5.500h9v9h-9z" fill="none" stroke="#111" /></svg>
          </button>
          <button aria-label="关闭" className="flex h-[30px] w-[46px] items-center justify-center">
            <svg viewBox="0 0 10 10" className="size-2.5"><path d="M0 0l10 10M10 0L0 10" stroke="#111" /></svg>
          </button>
        </div>
      </header>

      <nav className="flex h-5 items-center pl-[5px]">
        <button className="mr-3 whitespace-pre"><Mixed>文件</Mixed><span className="ml-3">(Z)</span></button>
        <button className="whitespace-pre"><Mixed>选项</Mixed><span className="ml-[30px]">(Y)</span></button>
      </nav>

      <section className="flex h-10 border border-[#d0d0d0] pr-[75px] pl-[5px]">
        <button className={clsx(button, 'mt-[3px] h-[26px] w-[174px] shrink-0')}>以管理员身份重新启动</button>
        <div className="mt-0.5 ml-1.5"><WarningIcon /></div>
        <p className="ml-2 flex-1 self-center overflow-hidden whitespace-nowrap">
          <Mixed>{'WizTree 需要 "管理员" 权限, 启用高速扫描 NTFS 硬盘和访问所有的系统文件和文件夹. 点击 "以管理员身份重新启动" 按钮启用管理员权限.'}</Mixed>
        </p>
        <label className="flex h-[30px] shrink-0 items-center gap-1 text-[13px]">
          <input type="checkbox" className="size-[13px]" />
          不要再次显示
        </label>
      </section>

      <section className="flex h-[83px]">
        <div className={clsx(panel, 'w-[369px] shrink-0 border px-[5px] pt-[5px]')}>
          <div className="flex items-center">
            <label htmlFor="drive" className="w-[74px] text-[13px] leading-4">选择:</label>
            <div className="relative h-[23px] w-[210px] border border-b-2 border-[#e3e3e3] border-b-[#0067c0] bg-white p-0.5">
              <select id="drive" className="block h-[18px] w-[188px] appearance-none bg-[#0078d7] pb-1 pl-0.5 text-[13px] leading-[14px] text-white outline-1 -outline-offset-1 outline-dotted outline-[#f0a850]">
                <option>[C:] 本地磁盘</option>
              </select>
              <svg viewBox="0 0 8 5" className="absolute top-2 right-[5px] h-[5px] w-2"><path d="M0 .5l4 4 4-4" fill="none" stroke="#777" /></svg>
            </div>
            <button className={clsx(button, 'ml-[7px] h-[25px] w-[68px]')}>扫描</button>
          </div>
          <div className="mt-1 flex h-[25px] items-center justify-between pr-0.5">
            <span className="text-[13px]">扫描完成</span>
            <button aria-label="筛选" className="mb-1.5">
              <svg viewBox="0 0 14 14" className="size-3.5"><path d="M.8.700h12.400L8.500 7v5.500l-3-1.800V7z" fill="none" stroke="#111" strokeWidth="1.300" /></svg>
            </button>
          </div>
          <div className="ml-px h-3.5 border border-[#55ab66] bg-[#6fc77f]" />
        </div>

        <div className={clsx(panel, 'grid w-[508px] shrink-0 grid-cols-[124px_61px_71px_107px_1fr] content-start gap-x-0 border-y border-r pt-px pl-[5px] text-[13px] leading-[19px]')}>
          <span>选择:</span>
          <b className="text-right text-xs leading-[19px]">[C:]</b>
          <b className="pl-2 text-sm leading-[19px]">本地磁盘</b>
          <span /><span />
          <span className="pl-6">总空间:</span>
          <b className="text-right text-xs leading-[19px]">223.6 GB</b>
          <span /><span /><span />
          <span className="pl-[18px]">已用空间:</span>
          <b className="text-right text-xs leading-[19px]">52.6 GB</b>
          <b className="pl-2 text-xs leading-[19px]">(23.5%)</b>
          <span>预留空间:</span>
          <b className="text-xs leading-[19px]">n/a</b>
          <span className="pl-[18px]">可用空间:</span>
          <b className="text-right text-xs leading-[19px]">171.0 GB</b>
          <b className="pl-2 text-xs leading-[19px]">(76.5%)</b>
        </div>

        <div className={clsx(panel, 'flex min-w-0 flex-1 border-y border-r pt-1 pl-1')}>
          <AppLogo className="h-[62px] w-16 shrink-0" />
          <div className="ml-[5px] pt-[3px]">
            <h2 className="text-[15px] leading-5 font-bold">WizTree v4.28 x32</h2>
            <p className="text-[11px] leading-4"><Mixed>© 2025 抗体软件</Mixed></p>
            <p className="text-[11px] leading-4"><Mixed>由 th_sjy 汉化</Mixed></p>
          </div>
        </div>
      </section>

      <div role="tablist" className="flex h-6 items-end pl-0.5 text-[13px]">
        {TABS.map(name => (
          <button
            key={name}
            role="tab"
            aria-selected={tab === name}
            onClick={() => setTab(name)}
            className={clsx('h-6 rounded-t', tab === name ? 'relative z-10 -mb-px border border-b-0 border-[#d0d0d0] bg-[#fafafa] px-[5px] pb-1' : 'pr-2.5 pl-1.5 text-[#444]')}
          >
            {name}
          </button>
        ))}
      </div>

      <main className="flex flex-1 flex-col border border-[#d0d0d0] px-[3px] pt-[3px]">
        <div className="flex gap-[3px] pl-px">
          <FolderTable />
          <ExtensionTable />
        </div>
        <p className="h-[23px] text-center leading-[27px]">[C:\]</p>
        <TreeMap />
      </main>
    </div>
  )
}
